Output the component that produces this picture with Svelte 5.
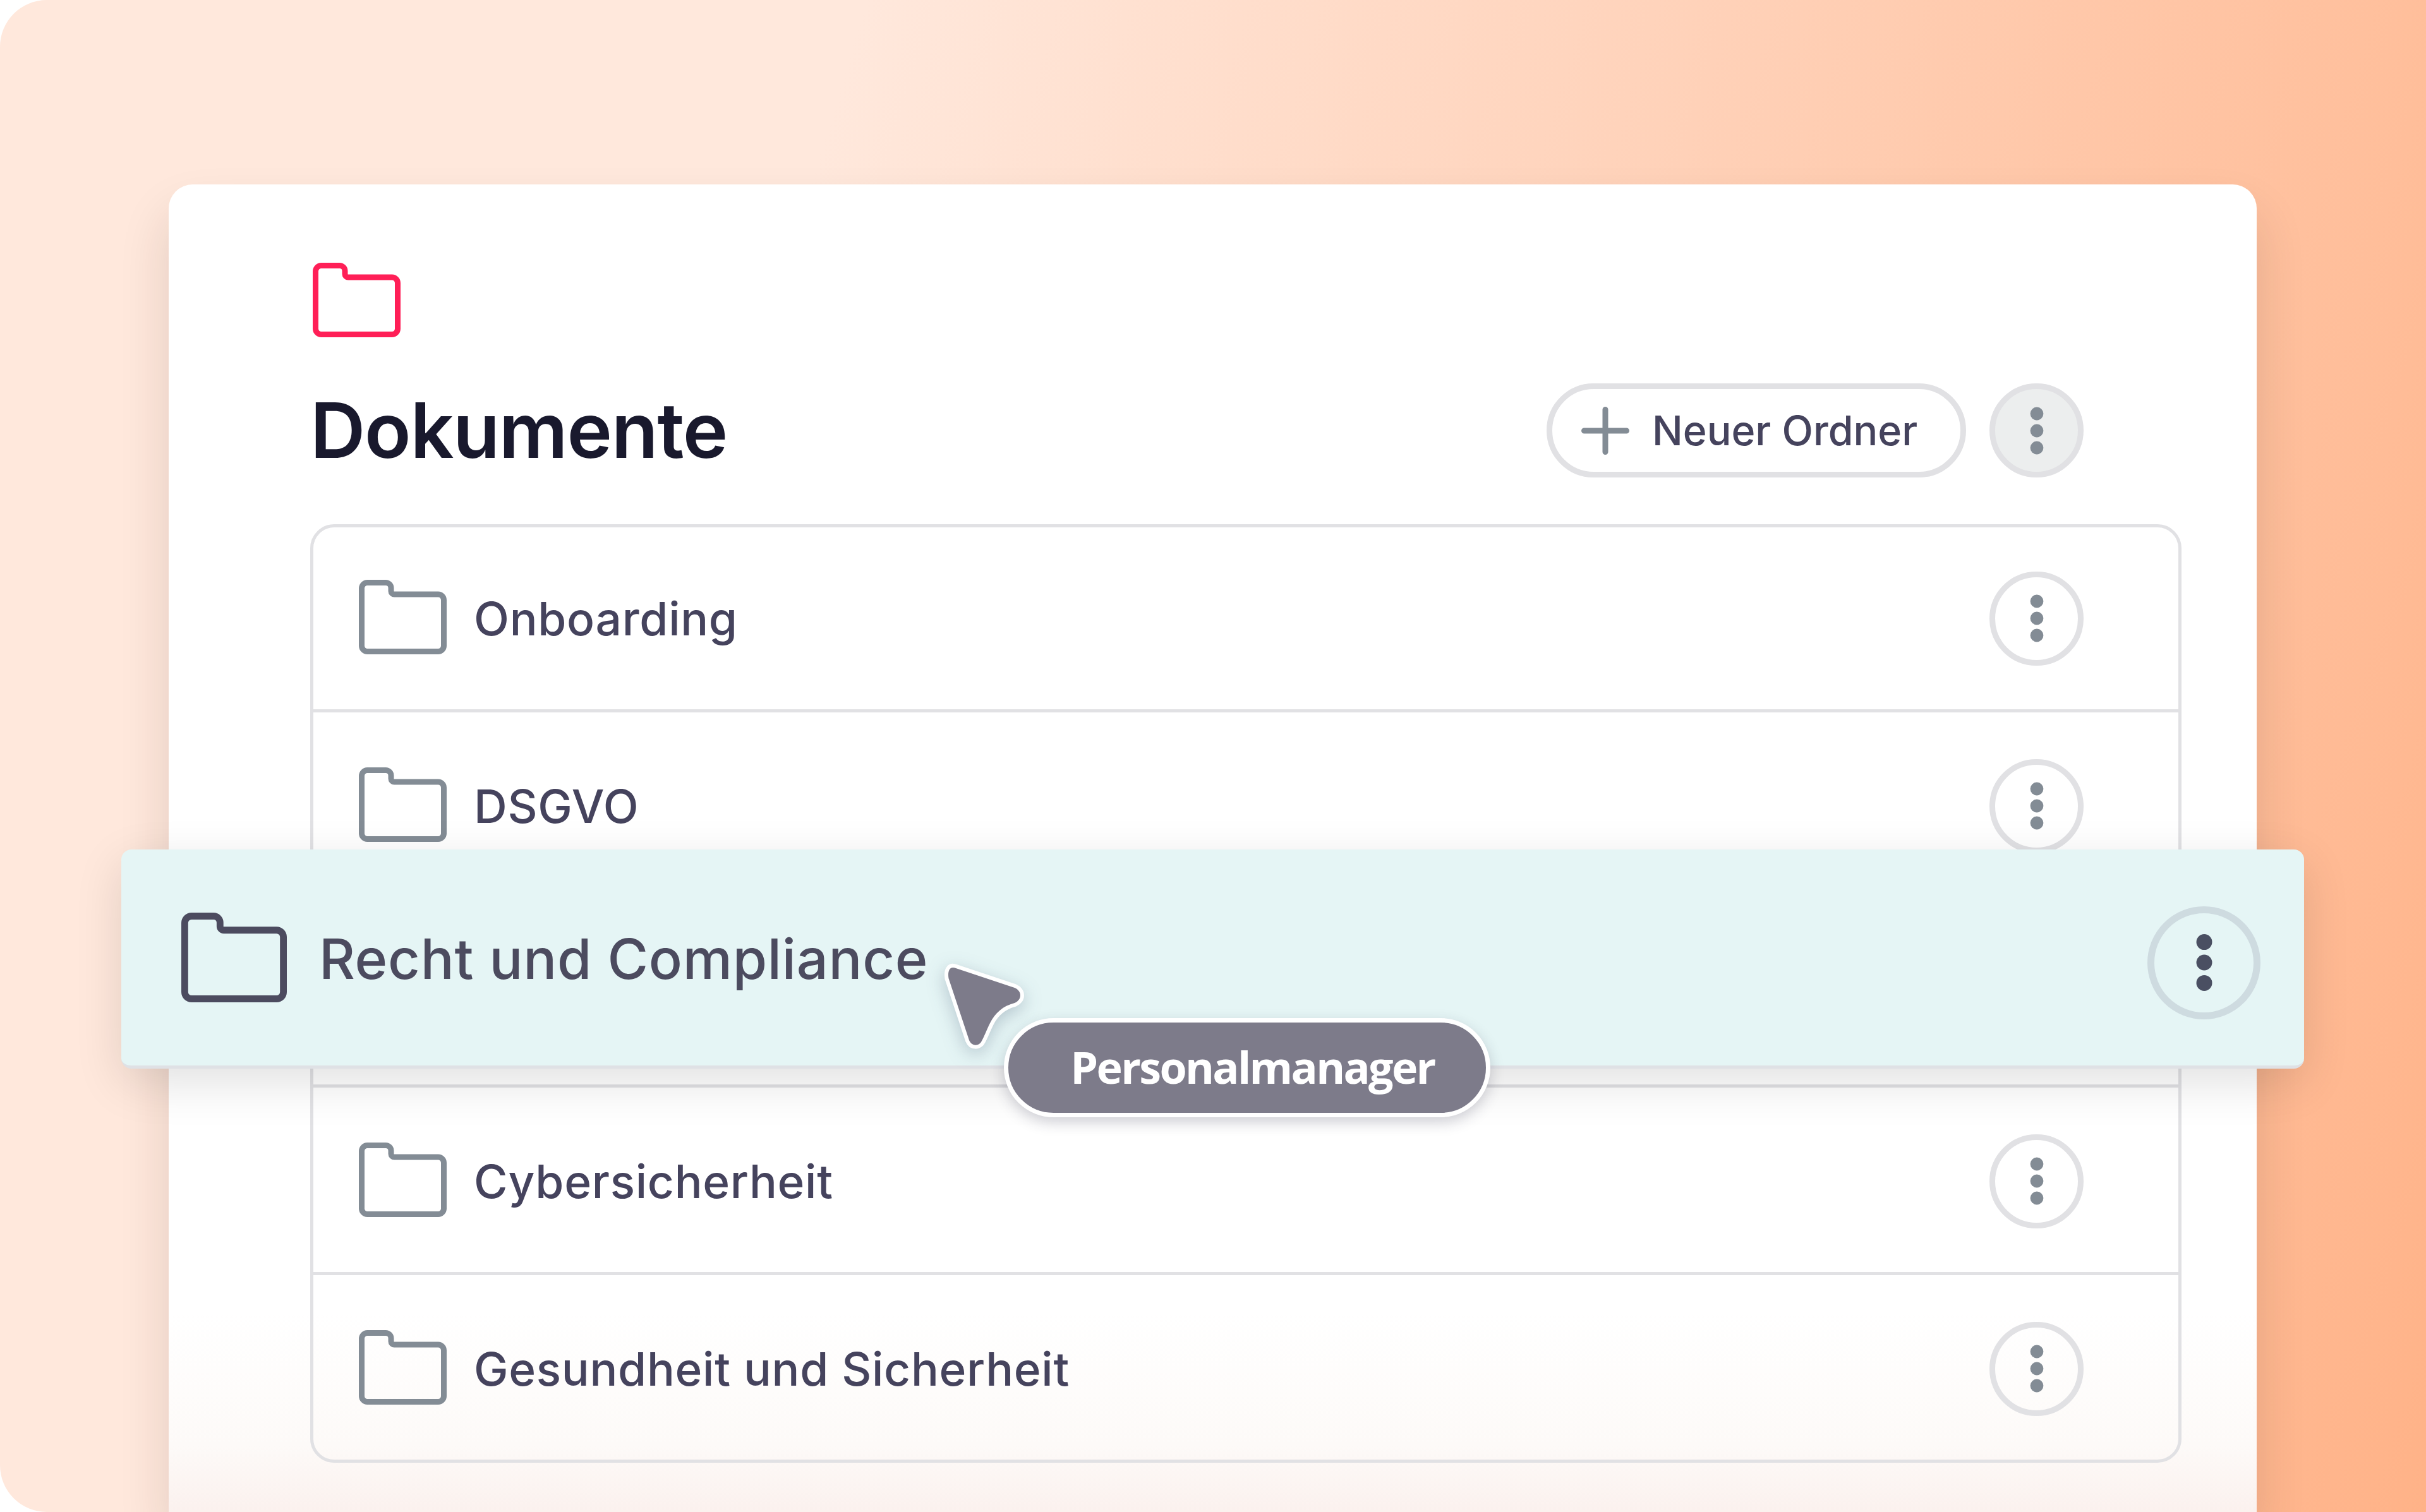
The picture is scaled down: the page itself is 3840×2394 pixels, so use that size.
<script lang="ts">
  type Folder = {
    id: string;
    label: string;
    dragging?: boolean;
  };

  const folders: Folder[] = [
    { id: 'onboarding', label: 'Onboarding' },
    { id: 'dsgvo', label: 'DSGVO' },
    { id: 'compliance', label: 'Recht und Compliance', dragging: true },
    { id: 'cyber', label: 'Cybersicherheit' },
    { id: 'health', label: 'Gesundheit und Sicherheit' }
  ];
</script>

{#snippet folderIcon()}
  <svg class="folder" viewBox="0 0 139 118" fill="none" stroke="currentColor" stroke-width="9">
    <path
      d="M13.5 4.5H42.5A8.5 8.5 0 0 1 51 13V18A5 5 0 0 0 56 23H125.5A9 9 0 0 1 134.5 32V104.5A9 9 0 0 1 125.5 113.5H13.5A9 9 0 0 1 4.5 104.5V13.5A9 9 0 0 1 13.5 4.5Z"
    />
  </svg>
{/snippet}

{#snippet menuButton(filled = false)}
  <button type="button" class="menu" class:filled aria-label="Mehr">
    <svg viewBox="0 0 150 150" fill="currentColor">
      <circle cx="75" cy="48" r="10.4" />
      <circle cx="75" cy="75" r="10.4" />
      <circle cx="75" cy="102" r="10.4" />
    </svg>
  </button>
{/snippet}

<main class="stage">
  <section class="card">
    <div class="brand">{@render folderIcon()}</div>
    <header>
      <h1>Dokumente</h1>
      <div class="actions">
        <button type="button" class="new">
          <svg class="plus" viewBox="0 0 76 76" stroke="currentColor" stroke-width="9">
            <path d="M38 4.5V71.5M4.5 38H71.5" stroke-linecap="round" />
          </svg>
          <span>Neuer Ordner</span>
        </button>
        {@render menuButton(true)}
      </div>
    </header>

    <ul>
      {#each folders as folder (folder.id)}
        <li>
          {#if folder.dragging}
            <div class="dragged">
              {@render folderIcon()}
              <span class="label">{folder.label}</span>
              {@render menuButton()}
              <div class="pointer">
                <svg viewBox="0 0 150 150">
                  <path
                    d="M10.5 27C8.5 14 13 7 22 11L115 42C127 47 127 61 115 66C96 71 84 82 76 98C70 110 68 117 63 126C59 135 47 135 43 125Z"
                  />
                </svg>
                <span class="tag">Personalmanager</span>
              </div>
            </div>
          {:else}
            {@render folderIcon()}
            <span class="label">{folder.label}</span>
            {@render menuButton()}
          {/if}
        </li>
      {/each}
    </ul>
  </section>
</main>

<style>
  :global(body) {
    background: #fff;
  }
  .stage {
    box-sizing: border-box;
    width: 3840px;
    height: 2394px;
    padding: 292px 268px 0 267px;
    overflow: hidden;
    border-radius: 74px 0 0 74px;
    background: linear-gradient(107deg, #ffe8dc 30%, #ffb084 103%);
    font-family: Inter, 'Liberation Sans', sans-serif;
    color: #45435d;
  }
  .card {
    position: relative;
    box-sizing: border-box;
    height: 2102px;
    padding: 124px 119px 0 224px;
    border-radius: 38px 38px 0 0;
    background: linear-gradient(#fff 85%, #fdfaf8 95%, #fbf1ee 100%);
    box-shadow: 0 46px 80px rgba(50, 25, 20, 0.14);
  }
  .folder {
    display: block;
    flex: none;
    width: 139px;
    height: 118px;
  }
  .brand {
    padding-left: 4px;
    color: #ff1f57;
  }
  header {
    display: flex;
    align-items: center;
    justify-content: space-between;
    height: 149px;
    margin-top: 73px;
    padding-right: 155px;
  }
  h1 {
    margin: 0;
    color: #19192d;
    font-size: 121px;
    font-weight: 600;
    line-height: 1;
    letter-spacing: -1.3px;
  }
  .actions {
    display: flex;
    gap: 37px;
  }
  button {
    box-sizing: border-box;
    margin: 0;
    border: 9px solid #e1e1e4;
    background: none;
    font: inherit;
    color: inherit;
  }
  .new {
    display: flex;
    align-items: center;
    gap: 36px;
    width: 664px;
    height: 149px;
    padding: 0 0 0 46px;
    border-radius: 75px;
    font-size: 64.5px;
    font-weight: 450;
    white-space: nowrap;
  }
  .plus {
    width: 76px;
    height: 76px;
    color: #838c95;
  }
  .menu {
    flex: none;
    width: 149px;
    height: 149px;
    padding: 0;
    border-radius: 50%;
    color: #838c95;
  }
  .menu svg {
    display: block;
    width: 150px;
    height: 150px;
    margin: -9.5px;
  }
  .menu.filled {
    background: #eceeee;
  }
  ul {
    margin: 74px 0 0;
    padding: 0;
    border: 5px solid #e1e1e4;
    border-radius: 38px;
    list-style: none;
  }
  li {
    position: relative;
    display: flex;
    align-items: center;
    box-sizing: border-box;
    height: 297px;
    padding: 4px 150px 0 72px;
    border-bottom: 5px solid #e1e1e4;
  }
  li:first-child {
    height: 293px;
    padding-top: 0;
  }
  li:last-child {
    height: 292px;
    border-bottom: 0;
  }
  li > .folder {
    margin-bottom: 5px;
    color: #838c95;
  }
  .label {
    flex: 1;
    margin-left: 43px;
    font-size: 73px;
    font-weight: 450;
    letter-spacing: 0.7px;
    white-space: nowrap;
  }

  /* row lifted out of the list while it is being dragged */
  .dragged {
    position: absolute;
    z-index: 1;
    top: -80px;
    left: -304px;
    display: flex;
    align-items: center;
    box-sizing: border-box;
    width: 3455px;
    height: 347px;
    padding: 0 69px 0 95px;
    border-bottom: 5px solid #dfe1e5;
    border-radius: 16px;
    background: #e5f5f5;
    box-shadow: 0 22px 76px rgba(0, 0, 0, 0.12);
    color: #4c4b5f;
  }
  .dragged .folder {
    width: 167px;
    height: 142px;
  }
  .dragged .label {
    margin-top: 3px;
    margin-left: 51px;
    font-size: 88px;
    letter-spacing: 0.8px;
  }
  .dragged .menu {
    width: 179px;
    height: 179px;
    margin-top: 16px;
    border-width: 11px;
    border-color: #cedbe0;
    color: #4a4f62;
  }
  .dragged .menu svg {
    width: 180px;
    height: 180px;
    margin: -11.5px;
  }
  .pointer {
    position: absolute;
    top: 177px;
    left: 1299px;
  }
  .pointer svg {
    display: block;
    width: 150px;
    height: 150px;
    overflow: visible;
    filter: drop-shadow(0 8px 14px rgba(40, 60, 90, 0.25));
  }
  .pointer path {
    fill: #7d7b8a;
    stroke: #fff;
    stroke-width: 12px;
    stroke-linejoin: round;
    paint-order: stroke;
  }
  .tag {
    display: flex;
    align-items: center;
    justify-content: center;
    box-sizing: border-box;
    width: 770px;
    height: 157px;
    margin: -60px 0 0 98px;
    padding: 0 0 3px 17px;
    border: 7px solid #fff;
    border-radius: 79px;
    background: #7d7b8a;
    box-shadow: 0 8px 22px rgba(40, 40, 70, 0.22);
    color: #fff;
    font-family: 'Open Sans', 'Noto Sans', sans-serif;
    font-size: 70px;
    font-weight: 700;
    line-height: 1;
    letter-spacing: -2.7px;
  }
</style>
